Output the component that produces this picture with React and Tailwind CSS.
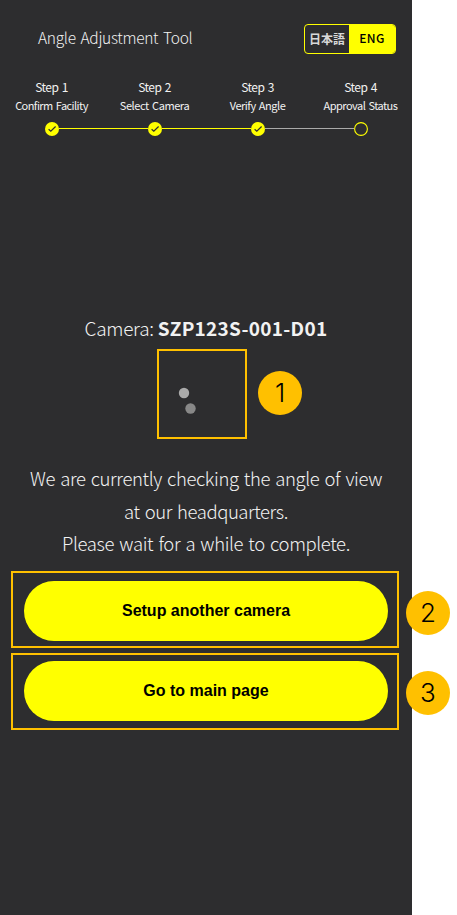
const steps = [
  { name: 'Step 1', label: 'Confirm Facility', fit: 'tracking-[-0.56px]', done: true },
  { name: 'Step 2', label: 'Select Camera', fit: 'tracking-[-0.42px]', done: true },
  { name: 'Step 3', label: 'Verify Angle', fit: 'tracking-[-0.48px]', done: true },
  { name: 'Step 4', label: 'Approval Status', fit: 'tracking-[-0.53px]', done: false },
];

function Header() {
  return (
    <header className="flex h-[78px] items-start justify-between pl-[38px] pr-4 pt-6">
      <h1 className="h-[30px] whitespace-nowrap text-[15.5px] font-light leading-[27px] tracking-[-0.29px] [word-spacing:1.6px]">Angle Adjustment Tool</h1>
      <div className="flex h-[30px] w-[92px] overflow-hidden rounded-[4px] border border-[#ffff00] text-[12px] font-medium">
        <button className="flex h-[27px] w-[44px] items-center justify-center whitespace-nowrap font-bold text-[#d8d8d8]">日本語</button>
        <button className="flex-1 bg-[#ffff00] pb-[2px] text-center text-black tracking-[0.4px]">ENG</button>
      </div>
    </header>
  );
}

function Marker({ done }) {
  return (
    <svg className="size-[14px] shrink-0" viewBox="0 0 14 14" fill="none">
      <circle cx="7" cy="7" r={done ? 7 : 6.4} fill={done ? '#ffff00' : 'none'} stroke={done ? 'none' : '#ffff00'} strokeWidth="1.1" />
      {done && <path d="M3.6 7.3 5.8 9.2 10.6 4.5" stroke="#2d2d2f" strokeWidth="1.2" />}
    </svg>
  );
}

function Stepper() {
  return (
    <ol className="grid grid-cols-4">
      {steps.map((s, i) => (
        <li key={s.name} className="flex flex-col items-center whitespace-nowrap">
          <span className="h-[19px] text-[12px] leading-[18px] tracking-[-0.55px] [word-spacing:1.2px]">{s.name}</span>
          <span className={`h-[25px] text-[11px] leading-[16px] [word-spacing:1.2px] ${s.fit}`}>{s.label}</span>
          <div className="flex w-full items-start">
            <span className={`mt-[6px] h-px flex-1 ${i === 0 ? 'bg-transparent' : i === 3 ? 'bg-[#aaaaaa]' : 'bg-[#ffff00]'}`} />
            <Marker done={s.done} />
            <span className={`mt-[6px] h-px flex-1 ${i === 3 ? 'bg-transparent' : i === 2 ? 'bg-[#aaaaaa]' : 'bg-[#ffff00]'}`} />
          </div>
        </li>
      ))}
    </ol>
  );
}

function Badge({ n }) {
  return (
    <span className="flex size-[44px] shrink-0 items-center justify-center rounded-full bg-[#ffc000] font-['Inter',sans-serif] text-[26px] font-light leading-none text-black">
      {n}
    </span>
  );
}

function Action({ children, n }) {
  return (
    <div className="flex h-[77px] w-[439px] items-start">
      <div className="h-[77px] w-[388px] shrink-0 border-2 border-[#ffc000] pl-[11px] pr-[9px] pt-[8px] group-last:pt-[6px]">
        <button className="h-[60px] w-full rounded-full bg-[#ffff00] font-['Liberation_Sans',sans-serif] text-[16px] font-bold text-black">
          {children}
        </button>
      </div>
      <div className="ml-[7px] mt-[20px] group-last:mt-[18px]">
        <Badge n={n} />
      </div>
    </div>
  );
}

export default function App() {
  return (
    <div className="h-[915px] w-[457px] overflow-hidden bg-white">
      <main className="flex h-full w-[412px] flex-col bg-[#2d2d2f] font-['Noto_Sans_CJK_JP',sans-serif] text-[#f2f2f2]">
        <Header />
        <Stepper />
        <section className="mt-[179px] flex flex-col">
          <p className="h-[34px] whitespace-nowrap text-center text-[19px] font-light leading-[26px] tracking-[-0.3px]">
            Camera: <strong className="font-bold tracking-[0.27px]">SZP123S-001-D01</strong>
          </p>
          <div className="flex h-[90px] items-center pl-[157px]">
            <div className="size-[90px] border-2 border-[#ffc000]">
              <svg className="size-[86px]" viewBox="0 0 86 86">
                <circle cx="25" cy="42" r="5.2" fill="#aaaaaa" />
                <circle cx="31.5" cy="57.5" r="5.2" fill="#888888" />
              </svg>
            </div>
            <div className="mb-[2px] ml-[11px]">
              <Badge n="1" />
            </div>
          </div>
          <div className="mt-[23px] h-[109px] whitespace-nowrap text-center text-[18.5px] font-light leading-[32.5px]">
            <p className="tracking-[-0.39px] [word-spacing:1.5px]">We are currently checking the angle of view</p>
            <p className="tracking-[-0.44px] [word-spacing:1.5px]">at our headquarters.</p>
            <p className="tracking-[-0.38px] [word-spacing:1.5px]">Please wait for a while to complete.</p>
          </div>
          <div className="flex flex-col gap-[5px] pl-[11px]">
            <div className="group"><Action n="2">Setup another camera</Action></div>
            <div className="group"><Action n="3">Go to main page</Action></div>
          </div>
        </section>
      </main>
    </div>
  );
}
